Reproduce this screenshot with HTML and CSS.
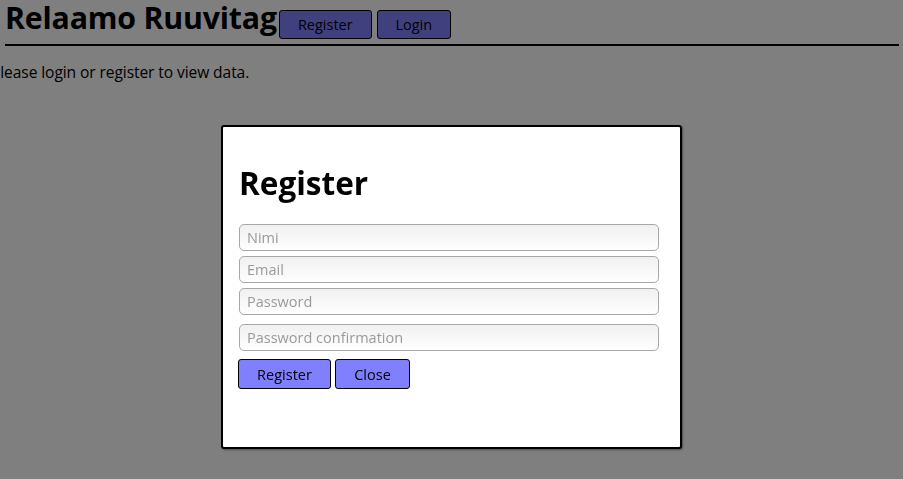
FILE: index.html
```html
<!DOCTYPE html>
<html>
<head>
<meta charset="utf-8">
<link rel="stylesheet" href="styles.css">
</head>
<body>
<header class="top">
  <h1 class="title">Relaamo Ruuvitag</h1>
  <button class="btn btn-top">Register</button>
  <button class="btn btn-top btn-login">Login</button>
</header>
<p class="info">Please login or register to view data.</p>
<div class="overlay">
  <div class="modal">
    <h2 class="modal-title">Register</h2>
    <form class="form">
      <input class="field" type="text" placeholder="Nimi">
      <input class="field" type="text" placeholder="Email">
      <input class="field" type="password" placeholder="Password">
      <input class="field field-confirm" type="password" placeholder="Password confirmation">
      <div class="actions">
        <button type="button" class="btn btn-reg">Register</button>
        <button type="button" class="btn btn-close">Close</button>
      </div>
    </form>
  </div>
</div>
</body>
</html>
```
FILE: styles.css
```css
html, body {
  margin: 0;
  padding: 0;
  background: #ffffff;
  font-family: "Open Sans", "Noto Sans", sans-serif;
  color: #000;
}
.top {
  display: flex;
  align-items: flex-start;
  margin: 0 4px 0 5px;
  height: 44px;
  border-bottom: 2px solid #000;
}
.title {
  flex: none;
  margin: 0;
  font-size: 30.3px;
  font-weight: 700;
  line-height: 36px;
  letter-spacing: -0.2px;
  white-space: nowrap;
}
.btn {
  font-family: "Open Sans", "Noto Sans", sans-serif;
  font-size: 14.5px;
  background: #8080ff;
  border: 1px solid #000;
  border-radius: 3px;
  color: #000;
  padding: 0;
  height: 30px;
}
.btn-top {
  flex: none;
  margin-top: 10px;
  margin-left: 2px;
  width: 93px;
  height: 29px;
}
.btn-login {
  margin-left: 5px;
  width: 74px;
}
.info {
  margin: 15px 0 0 -9px;
  font-size: 15.6px;
  line-height: 22px;
  letter-spacing: -0.1px;
}
.overlay {
  position: fixed;
  inset: 0;
  background: rgba(0, 0, 0, 0.5);
  display: flex;
  justify-content: center;
  padding-top: 125px;
  box-sizing: border-box;
  align-items: flex-start;
}
.modal {
  width: 425px;
  height: 320px;
  background: #fff;
  border: 2px solid #000;
  border-radius: 3px;
  padding: 0 16px;
  box-sizing: content-box;
  box-shadow: 1px 1px 2px rgba(0,0,0,0.4);
}
.modal-title {
  margin: 36px 0 0 0;
  font-size: 31.5px;
  font-weight: 700;
  line-height: 40px;
}
.form {
  display: flex;
  flex-direction: column;
  margin-top: 21px;
}
.field {
  width: 420px;
  height: 27px;
  box-sizing: border-box;
  margin: 0 0 5px 0;
  border: 1px solid #a8a8a8;
  border-radius: 5px;
  background: linear-gradient(#f0f0f0, #ffffff);
  font-family: "Open Sans", "Noto Sans", sans-serif;
  font-size: 14.5px;
  padding: 0 7px;
  color: #333;
}
.field::placeholder {
  color: #9a9a9a;
}
.field-confirm {
  margin-top: 4px;
}
.actions {
  display: flex;
  gap: 4px;
  margin-top: 3px;
  margin-left: -1px;
}
.btn-reg {
  width: 93px;
}
.btn-close {
  width: 75px;
}
```
